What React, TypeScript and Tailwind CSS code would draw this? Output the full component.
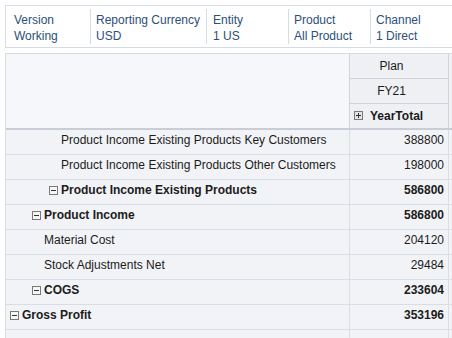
const filters = [
  { label: "Version", value: "Working", w: "w-[84px]", pad: "pl-[8px]" },
  { label: "Reporting Currency", value: "USD", w: "w-[116px]", pad: "pl-[5px]" },
  { label: "Entity", value: "1 US", w: "w-[82px]", pad: "pl-[6px]" },
  { label: "Product", value: "All Product", w: "w-[82px]", pad: "pl-[5px]" },
  { label: "Channel", value: "1 Direct", w: "w-[90px]", pad: "pl-[5px]" },
];

type Row = { label: string; value: string; indent: string; bold?: boolean; toggle?: boolean };

const rows: Row[] = [
  { label: "Product Income Existing Products Key Customers", value: "388800", indent: "pl-[55px]" },
  { label: "Product Income Existing Products Other Customers", value: "198000", indent: "pl-[55px]" },
  { label: "Product Income Existing Products", value: "586800", indent: "pl-[43px]", bold: true, toggle: true },
  { label: "Product Income", value: "586800", indent: "pl-[26px]", bold: true, toggle: true },
  { label: "Material Cost", value: "204120", indent: "pl-[38px]" },
  { label: "Stock Adjustments Net", value: "29484", indent: "pl-[38px]" },
  { label: "COGS", value: "233604", indent: "pl-[26px]", bold: true, toggle: true },
  { label: "Gross Profit", value: "353196", indent: "pl-[4px]", bold: true, toggle: true },
];

function Toggle(props: { plus?: boolean }) {
  return (
    <svg width="9" height="9" viewBox="0 0 9 9" className="mr-[3px] shrink-0">
      <rect x="0.5" y="0.5" width="8" height="8" fill={props.plus ? "#e4e4e4" : "#f6f6f6"} stroke="#7a7a7a" />
      <line x1="2" y1="4.5" x2="7" y2="4.5" stroke="#333" />
      {props.plus && <line x1="4.5" y1="2" x2="4.5" y2="7" stroke="#333" />}
    </svg>
  );
}

export default function App() {
  return (
    <div
      className="w-[452px] h-[338px] overflow-hidden bg-white pl-[5px] pt-[5px] text-[12px] leading-[16px]"
      style={{ fontFamily: '"Liberation Sans", Arial, sans-serif' }}
    >
      <div className="flex w-[460px] h-[43px] border border-[#d5dce4] text-[#2c4f78]">
        {filters.map((f, i) => (
          <div
            key={f.label}
            className={`${f.w} ${f.pad} shrink-0 pt-[3px] my-[3px] ${i > 0 ? "border-l border-[#d5dce4]" : ""}`}
          >
            <div className="whitespace-nowrap">{f.label}</div>
            <div className="whitespace-nowrap">{f.value}</div>
          </div>
        ))}
      </div>

      <div className="mt-[5px] w-[460px] border-t border-l border-[#d5dce4] text-[#1b1b1b]">
        <div className="flex border-b-2 border-[#c9ced6]">
          <div className="w-[343px] shrink-0 bg-[#f6f7fb]" />
          <div className="w-[99px] shrink-0 border-l border-[#cfd4dc] bg-[#eef0f4]">
            <div className="h-[25px] border-b border-[#cfd4dc] pt-[4px] text-center pr-[15px]">Plan</div>
            <div className="h-[25px] border-b border-[#cfd4dc] pt-[4px] text-center pr-[15px]">FY21</div>
            <div className="h-[24px] flex items-center pl-[4px] pb-[1px] font-bold">
              <Toggle plus />
              <span className="ml-[4px]">YearTotal</span>
            </div>
          </div>
          <div className="flex-1 border-l border-[#cfd4dc] bg-[#eef0f4]" />
        </div>

        {rows.map((r) => (
          <div key={r.label} className="flex h-[25px] border-b border-[#d9dee6] bg-[#f2f3f7]">
            <div className={`w-[343px] shrink-0 ${r.indent} pt-[2px] flex items-start ${r.bold ? "font-bold" : ""}`}>
              {r.toggle && (
                <span className="mt-[4px]">
                  <Toggle />
                </span>
              )}
              <span className="whitespace-nowrap">{r.label}</span>
            </div>
            <div className={`w-[99px] shrink-0 border-l border-[#d9dee6] text-right pr-[4px] pt-[2px] ${r.bold ? "font-bold" : ""}`}>
              {r.value}
            </div>
            <div className="flex-1 border-l border-[#d9dee6]" />
          </div>
        ))}
        <div className="flex h-[25px] bg-[#f2f3f7]">
          <div className="w-[343px] shrink-0" />
          <div className="w-[99px] shrink-0 border-l border-[#d9dee6]" />
          <div className="flex-1 border-l border-[#d9dee6]" />
        </div>
      </div>
    </div>
  );
}
